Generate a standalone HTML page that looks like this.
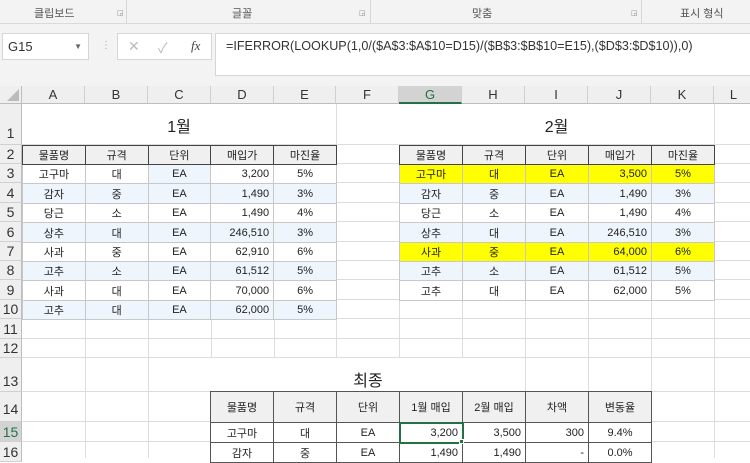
<!DOCTYPE html>
<html><head><meta charset="utf-8"><style>
*{margin:0;padding:0;box-sizing:border-box}
body{width:750px;height:458px;overflow:hidden;background:#fff;font-family:"Liberation Sans","Noto Sans CJK KR",sans-serif;position:relative;color:#222}
.a{position:absolute}
.rib{left:0;top:0;width:750px;height:24px;background:#f3f3f3;border-bottom:1px solid #dadada}
.rib span{position:absolute;top:5px;font-size:11px;color:#555}
.fb{left:0;top:24px;width:750px;height:62px;background:#f3f3f3}
.box{background:#fff;border:1px solid #d6d6d6}
.ch{top:86px;height:18px;background:#efefef;border-right:1px solid #d0d0d0;border-bottom:1px solid #bdbdbd;font-size:13px;color:#333;text-align:center;line-height:18px}
.rh{left:0;width:22px;background:#efefef;border-right:1px solid #bdbdbd;border-bottom:1px solid #d0d0d0;font-size:14px;color:#333;text-align:center}
.vl{top:104px;width:1px;height:354px;background:#dcdcdc}
.hl{left:22px;width:728px;height:1px;background:#dcdcdc}
table{position:absolute;border-collapse:collapse;font-size:11px;background:#fff}
td{border:1px solid #c8c8c8;text-align:center;padding:0 4px;white-space:nowrap;overflow:hidden}
td.r{text-align:right}
tr.h td{background:#f0f0f0;border:1px solid #444}
tr.b td{background:#eef5fc}
tr.y td{background:#ffff00}
td.bl{background:#eef5fc}
table.f td{border:1px solid #555}
.t{font-size:16px;text-align:center;color:#222}
</style></head><body>
<div class="a rib"><span style="left:34px">클립보드</span><span style="left:232px">글꼴</span><span style="left:472px">맞춤</span><span style="left:680px">표시 형식</span>
<div class="a" style="left:126px;top:0;width:1px;height:23px;background:#d6d6d6"></div>
<div class="a" style="left:370px;top:0;width:1px;height:23px;background:#d6d6d6"></div>
<div class="a" style="left:641px;top:0;width:1px;height:23px;background:#d6d6d6"></div>
<span style="left:117px;top:9px;font-size:7px;color:#888">◲</span><span style="left:359px;top:9px;font-size:7px;color:#888">◲</span><span style="left:631px;top:9px;font-size:7px;color:#888">◲</span></div>
<div class="a fb"></div>
<div class="a box" style="left:2px;top:33px;width:87px;height:27px;font-size:13px;padding:5px 0 0 5px;color:#333">G15<span style="position:absolute;right:6px;top:8px;font-size:8px;color:#666">▼</span></div>
<div class="a" style="left:101px;top:40px;font-size:10px;color:#aaa">⋮</div>
<div class="a box" style="left:117px;top:33px;width:95px;height:27px;font-size:14px;color:#bbb"><span class="a" style="left:10px;top:4px">✕</span><span class="a" style="left:40px;top:4px">✓</span><span class="a" style="left:73px;top:4px;color:#444;font-style:italic;font-family:'Liberation Serif',serif;font-size:13px">fx</span></div>
<div class="a box" style="left:215px;top:33px;width:540px;height:43px;font-size:12.6px;padding:5px 0 0 10px;color:#333">=IFERROR(LOOKUP(1,0/($A$3:$A$10=D15)/($B$3:$B$10=E15),($D$3:$D$10)),0)</div>
<div class="a" style="left:0;top:86px;width:22px;height:18px;background:#efefef;border-right:1px solid #bdbdbd;border-bottom:1px solid #bdbdbd"><div class="a" style="right:2px;bottom:2px;width:0;height:0;border-left:12px solid transparent;border-bottom:12px solid #bbb"></div></div>
<div class="a ch" style="left:22px;width:63px">A</div><div class="a ch" style="left:85px;width:63px">B</div><div class="a ch" style="left:148px;width:63px">C</div><div class="a ch" style="left:211px;width:63px">D</div><div class="a ch" style="left:274px;width:62px">E</div><div class="a ch" style="left:336px;width:63px">F</div><div class="a ch" style="left:399px;width:63px;background:#d3d3d3;color:#217346;border-bottom:2px solid #217346">G</div><div class="a ch" style="left:462px;width:63px">H</div><div class="a ch" style="left:525px;width:63px">I</div><div class="a ch" style="left:588px;width:63px">J</div><div class="a ch" style="left:651px;width:63px">K</div><div class="a ch" style="left:714px;width:40px">L</div>
<div class="a vl" style="left:85px"></div><div class="a vl" style="left:148px"></div><div class="a vl" style="left:211px"></div><div class="a vl" style="left:274px"></div><div class="a vl" style="left:336px"></div><div class="a vl" style="left:399px"></div><div class="a vl" style="left:462px"></div><div class="a vl" style="left:525px"></div><div class="a vl" style="left:588px"></div><div class="a vl" style="left:651px"></div><div class="a vl" style="left:714px"></div>
<div class="a hl" style="top:144px"></div><div class="a hl" style="top:163px"></div><div class="a hl" style="top:182px"></div><div class="a hl" style="top:202px"></div><div class="a hl" style="top:221px"></div><div class="a hl" style="top:241px"></div><div class="a hl" style="top:260px"></div><div class="a hl" style="top:279px"></div><div class="a hl" style="top:299px"></div><div class="a hl" style="top:318px"></div><div class="a hl" style="top:338px"></div><div class="a hl" style="top:357px"></div><div class="a hl" style="top:391px"></div><div class="a hl" style="top:421px"></div><div class="a hl" style="top:441px"></div>
<div class="a t" style="left:22px;top:104px;width:314px;height:40px;background:#fff;padding-top:9px">1월</div>
<div class="a t" style="left:399px;top:104px;width:315px;height:40px;background:#fff;padding-top:9px">2월</div>
<div class="a t" style="left:211px;top:358px;width:314px;height:33px;background:#fff;padding-top:9px">최종</div>
<div class="a rh" style="top:104px;height:41px;line-height:58px">1</div>
<div class="a rh" style="top:145px;height:19px;line-height:19px">2</div>
<div class="a rh" style="top:164px;height:19px;line-height:19px">3</div>
<div class="a rh" style="top:183px;height:20px;line-height:20px">4</div>
<div class="a rh" style="top:203px;height:19px;line-height:19px">5</div>
<div class="a rh" style="top:222px;height:20px;line-height:20px">6</div>
<div class="a rh" style="top:242px;height:19px;line-height:19px">7</div>
<div class="a rh" style="top:261px;height:19px;line-height:19px">8</div>
<div class="a rh" style="top:280px;height:20px;line-height:20px">9</div>
<div class="a rh" style="top:300px;height:19px;line-height:19px">10</div>
<div class="a rh" style="top:319px;height:20px;line-height:20px">11</div>
<div class="a rh" style="top:339px;height:19px;line-height:19px">12</div>
<div class="a rh" style="top:358px;height:34px;line-height:46px">13</div>
<div class="a rh" style="top:392px;height:30px;line-height:34px">14</div>
<div class="a rh" style="top:422px;height:20px;line-height:20px;background:#d3d3d3;color:#217346">15</div>
<div class="a rh" style="top:442px;height:20px;line-height:20px">16</div>
<table style="left:22px;top:145px;width:315px">
<colgroup><col style="width:63px"><col style="width:63px"><col style="width:63px"><col style="width:63px"><col style="width:63px"></colgroup>
<tr class="h" style="height:19px"><td>물품명</td><td>규격</td><td>단위</td><td>매입가</td><td>마진율</td></tr>
<tr style="height:19px"><td>고구마</td><td>대</td><td class="bl">EA</td><td class="r">3,200</td><td>5%</td></tr>
<tr class="b" style="height:20px"><td>감자</td><td>중</td><td>EA</td><td class="r">1,490</td><td>3%</td></tr>
<tr style="height:19px"><td>당근</td><td>소</td><td>EA</td><td class="r">1,490</td><td>4%</td></tr>
<tr class="b" style="height:20px"><td>상추</td><td>대</td><td>EA</td><td class="r">246,510</td><td>3%</td></tr>
<tr style="height:19px"><td>사과</td><td>중</td><td>EA</td><td class="r">62,910</td><td>6%</td></tr>
<tr class="b" style="height:19px"><td>고추</td><td>소</td><td>EA</td><td class="r">61,512</td><td>5%</td></tr>
<tr style="height:20px"><td>사과</td><td>대</td><td>EA</td><td class="r">70,000</td><td>6%</td></tr>
<tr class="b" style="height:19px"><td>고추</td><td>대</td><td>EA</td><td class="r">62,000</td><td>5%</td></tr>
</table>
<table style="left:399px;top:145px;width:316px">
<colgroup><col style="width:63px"><col style="width:63px"><col style="width:63px"><col style="width:63px"><col style="width:63px"></colgroup>
<tr class="h" style="height:19px"><td>물품명</td><td>규격</td><td>단위</td><td>매입가</td><td>마진율</td></tr>
<tr class="y" style="height:19px"><td>고구마</td><td>대</td><td>EA</td><td class="r">3,500</td><td>5%</td></tr>
<tr class="b" style="height:20px"><td>감자</td><td>중</td><td>EA</td><td class="r">1,490</td><td>3%</td></tr>
<tr style="height:19px"><td>당근</td><td>소</td><td>EA</td><td class="r">1,490</td><td>4%</td></tr>
<tr class="b" style="height:20px"><td>상추</td><td>대</td><td>EA</td><td class="r">246,510</td><td>3%</td></tr>
<tr class="y" style="height:19px"><td>사과</td><td>중</td><td>EA</td><td class="r">64,000</td><td>6%</td></tr>
<tr class="b" style="height:19px"><td>고추</td><td>소</td><td>EA</td><td class="r">61,512</td><td>5%</td></tr>
<tr style="height:20px"><td>고추</td><td>대</td><td>EA</td><td class="r">62,000</td><td>5%</td></tr>
</table>
<table class="f" style="left:210px;top:391px;width:442px">
<colgroup><col style="width:63px"><col style="width:63px"><col style="width:63px"><col style="width:63px"><col style="width:63px"><col style="width:63px"><col style="width:63px"></colgroup>
<tr class="h" style="height:31px"><td>물품명</td><td>규격</td><td>단위</td><td>1월 매입</td><td>2월 매입</td><td>차액</td><td>변동율</td></tr>
<tr style="height:20px"><td>고구마</td><td>대</td><td>EA</td><td class="r" style="outline:2px solid #217346;outline-offset:-1px">3,200</td><td class="r">3,500</td><td class="r">300</td><td>9.4%</td></tr>
<tr style="height:20px"><td>감자</td><td>중</td><td>EA</td><td class="r">1,490</td><td class="r">1,490</td><td class="r">-</td><td>0.0%</td></tr>
</table>
<div class="a" style="left:459px;top:439px;width:5px;height:5px;background:#217346;border:1px solid #fff"></div>
</body></html>
